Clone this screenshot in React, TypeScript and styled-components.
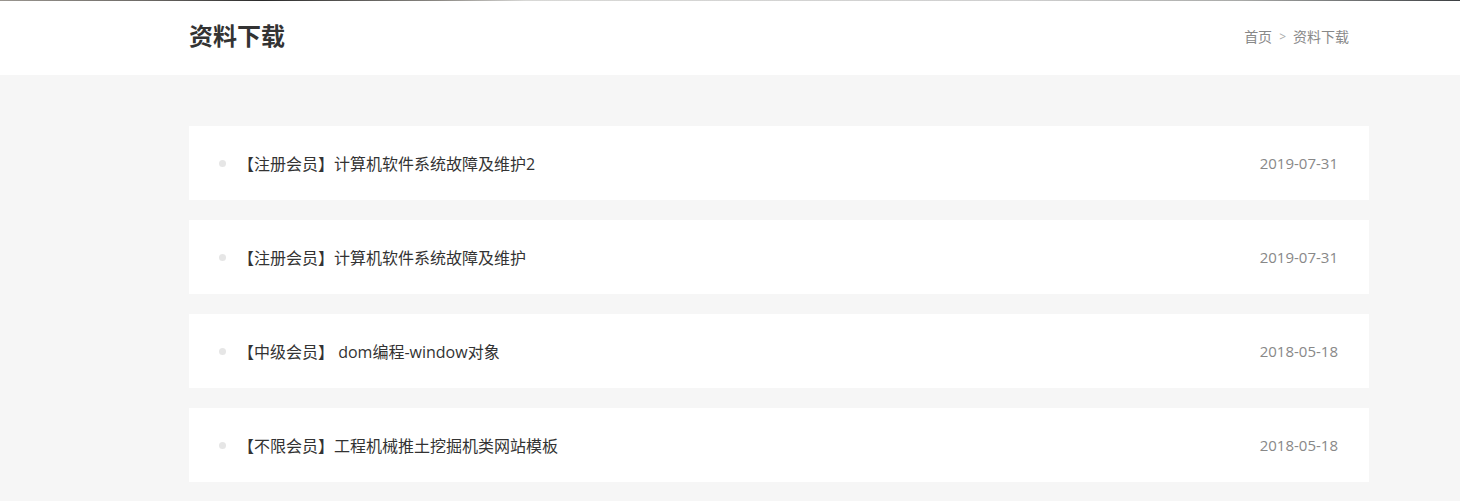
import styled, { createGlobalStyle } from "styled-components";

const GlobalStyle = createGlobalStyle`
  html, body {
    margin: 0;
    padding: 0;
    background: #f6f6f6;
    font-family: "Open Sans", "Noto Sans CJK SC", sans-serif;
  }
`;

const items = [
  { level: "注册会员", title: "计算机软件系统故障及维护2", date: "2019-07-31" },
  { level: "注册会员", title: "计算机软件系统故障及维护", date: "2019-07-31" },
  { level: "中级会员", title: " dom编程-window对象", date: "2018-05-18" },
  { level: "不限会员", title: "工程机械推土挖掘机类网站模板", date: "2018-05-18" },
];

// leftover edge of the banner image above the page head
const BannerEdge = styled.div`
  height: 1px;
  background: linear-gradient(
    90deg,
    #9a9690 0%,
    #6d6a66 10%,
    #2a2a2a 18%,
    #8b8883 30%,
    #d8d8d6 36%,
    #cfcfcf 70%,
    #a9aaa8 85%,
    #3c3f42 100%
  );
`;

const PageHead = styled.header`
  background: #fff;
  height: 74px;
`;

const Inner = styled.div`
  width: 1180px;
  margin-left: 189px;
`;

const HeadInner = styled(Inner)`
  display: flex;
  align-items: center;
  justify-content: space-between;
  height: 100%;
  box-sizing: border-box;
  padding-bottom: 4px;
`;

const Title = styled.h1`
  margin: 0;
  font-size: 24px;
  font-weight: 700;
  color: #333;
  line-height: 1;
`;

const Crumbs = styled.nav`
  display: flex;
  align-items: center;
  gap: 7px;
  font-size: 14px;
  color: #888;
  padding-right: 20px;
`;

const Sep = styled.span`
  color: #aaa;
  font-size: 12px;
`;

const Main = styled(Inner)`
  padding-top: 51px;
  display: flex;
  flex-direction: column;
  gap: 20px;
`;

const Row = styled.div`
  background: #fff;
  height: 74px;
  display: flex;
  align-items: center;
  padding: 0 31px 0 30px;
`;

const Dot = styled.span`
  width: 7px;
  height: 7px;
  border-radius: 50%;
  background: #e6e6e6;
  margin-right: 12px;
  flex: none;
`;

const ItemTitle = styled.a`
  flex: 1;
  font-size: 16px;
  color: #333;
  white-space: pre;
`;

const Date = styled.span`
  font-size: 15px;
  color: #888;
`;

export default function App() {
  return (
    <>
      <GlobalStyle />
      <BannerEdge />
      <PageHead>
        <HeadInner>
          <Title>资料下载</Title>
          <Crumbs>
            <span>首页</span>
            <Sep>&gt;</Sep>
            <span>资料下载</span>
          </Crumbs>
        </HeadInner>
      </PageHead>
      <Main>
        {items.map((it, i) => (
          <Row key={i}>
            <Dot />
            <ItemTitle>
              【{it.level}】{it.title}
            </ItemTitle>
            <Date>{it.date}</Date>
          </Row>
        ))}
      </Main>
    </>
  );
}
